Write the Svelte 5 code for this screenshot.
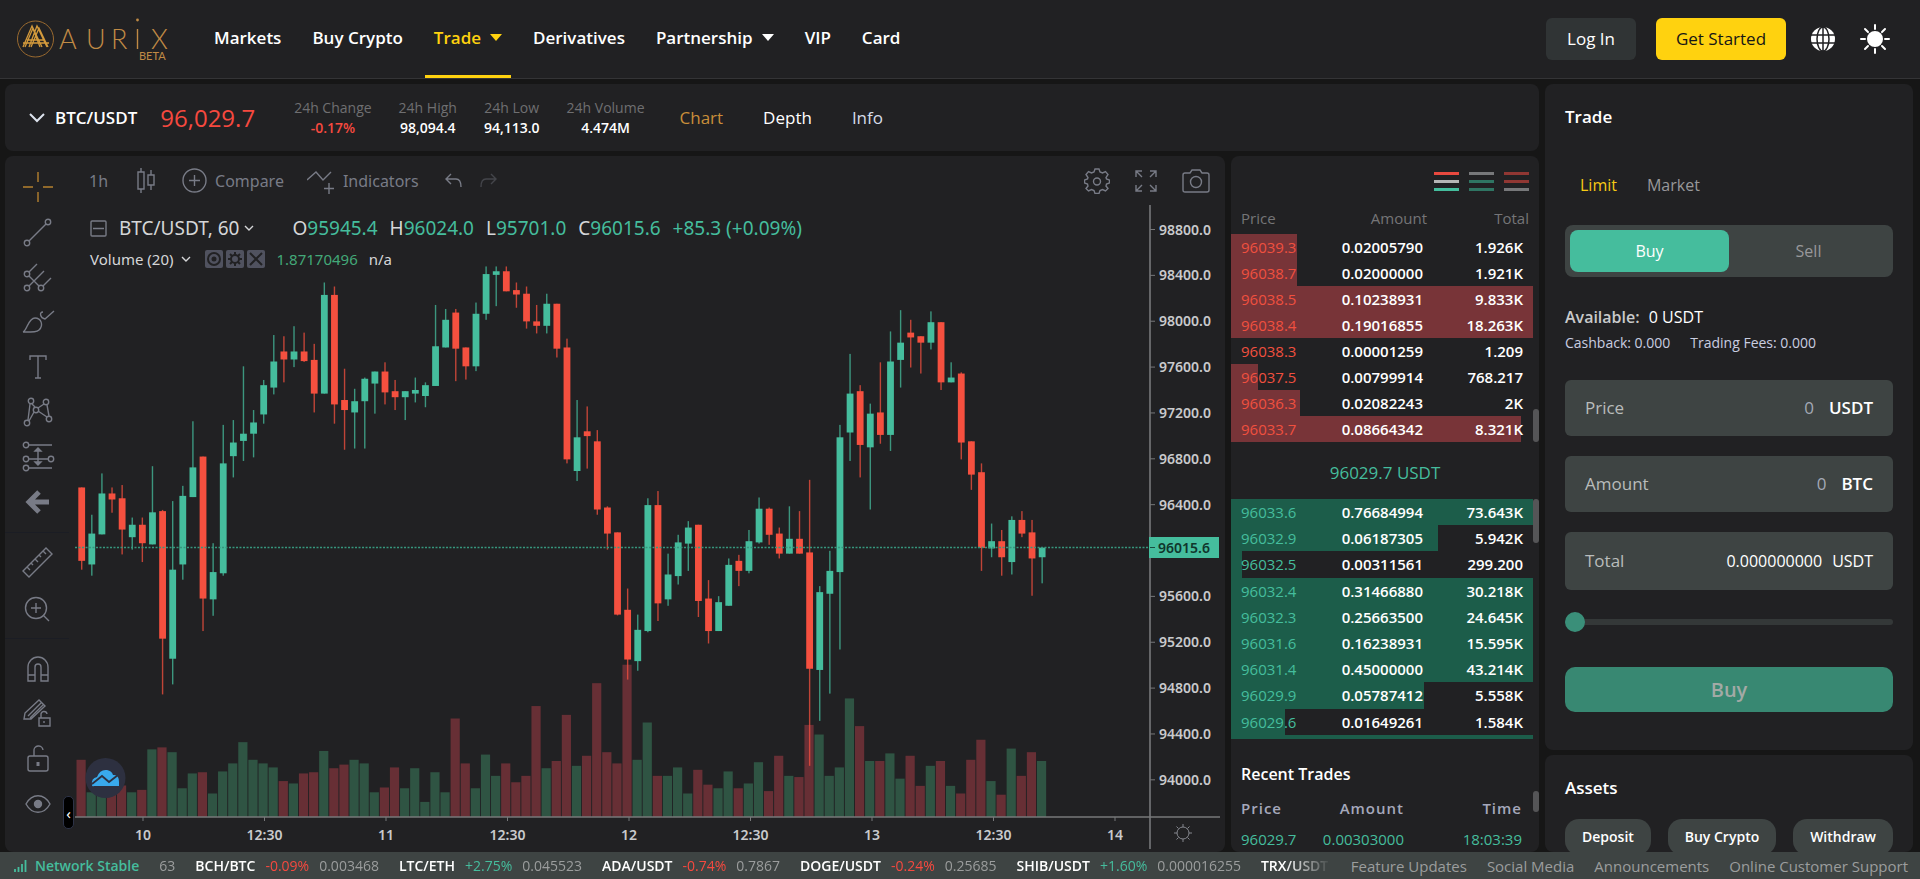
<script>
  let side = 'buy';
  let orderType = 'limit';
  let price = '';
  let amount = '';
  let percent = 0;

  const menu = [
    { label: 'Markets' },
    { label: 'Buy Crypto' },
    { label: 'Trade', caret: true, active: true },
    { label: 'Derivatives' },
    { label: 'Partnership', caret: true },
    { label: 'VIP' },
    { label: 'Card' }
  ];

  const stats = [
    { label: '24h Change', value: '-0.17%', down: true },
    { label: '24h High', value: '98,094.4' },
    { label: '24h Low', value: '94,113.0' },
    { label: '24h Volume', value: '4.474M' }
  ];

  // price, amount, total, depth %
  const asks = [
    ['96039.3', '0.02005790', '1.926K', 22],
    ['96038.7', '0.02000000', '1.921K', 22],
    ['96038.5', '0.10238931', '9.833K', 100],
    ['96038.4', '0.19016855', '18.263K', 100],
    ['96038.3', '0.00001259', '1.209', 0],
    ['96037.5', '0.00799914', '768.217', 9],
    ['96036.3', '0.02082243', '2K', 23],
    ['96033.7', '0.08664342', '8.321K', 96]
  ];
  const bids = [
    ['96033.6', '0.76684994', '73.643K', 100],
    ['96032.9', '0.06187305', '5.942K', 68.5],
    ['96032.5', '0.00311561', '299.200', 3.5],
    ['96032.4', '0.31466880', '30.218K', 100],
    ['96032.3', '0.25663500', '24.645K', 100],
    ['96031.6', '0.16238931', '15.595K', 100],
    ['96031.4', '0.45000000', '43.214K', 100],
    ['96029.9', '0.05787412', '5.558K', 64],
    ['96029.6', '0.01649261', '1.584K', 18]
  ];

  const tape = [
    ['BCH/BTC', '-0.09%', '0.003468'],
    ['LTC/ETH', '+2.75%', '0.045523'],
    ['ADA/USDT', '-0.74%', '0.7867'],
    ['DOGE/USDT', '-0.24%', '0.25685'],
    ['SHIB/USDT', '+1.60%', '0.000016255']
  ];
  const links = ['Feature Updates', 'Social Media', 'Announcements', 'Online Customer Support'];

  // up(1)/down(0), high, body top, body bottom, low, volume top
  const candles = [
    [0,592,592,775,797,1271],[1,660,707,784,812,1352],[1,557,607,709,709,1352],[0,592,607,622,655,1345],
    [0,586,619,697,759,1335],[1,667,685,716,747,1352],[0,667,685,731,778,1346],[1,539,654,734,734,1245],
    [0,648,651,969,1108,1240],[1,626,797,1019,1083,1252],[1,588,613,784,822,1342],[1,427,542,616,616,1305],
    [0,515,515,869,950,1302],[1,731,803,871,912,1355],[1,436,532,806,812,1300],[1,424,480,514,567,1280],
    [1,290,458,476,526,1227],[1,399,430,458,517,1271],[1,324,337,410,433,1280],[1,212,278,343,360,1290],
    [0,215,253,273,330,1324],[1,190,253,273,292,1330],[0,206,253,277,279,1305],[0,234,274,358,405,1302],
    [1,81,112,358,358,1249],[0,91,112,385,433,1292],[0,296,374,399,498,1283],[1,346,377,405,495,1271],
    [1,318,321,377,495,1280],[1,303,303,333,408,1352],[0,280,303,355,385,1340],[0,324,352,367,399,1290],
    [1,352,352,367,424,1342],[1,318,349,358,380,1292],[1,330,337,364,392,1376],[1,137,240,339,339,1302],
    [1,147,174,243,243,1352],[0,147,156,246,327,1168],[0,243,243,290,323,1280],[1,131,159,290,302,1342],
    [1,41,60,159,174,1258],[1,41,53,62,140,1311],[0,41,53,103,103,1280],[0,81,100,111,144,1327],
    [0,91,109,178,196,1311],[0,137,178,189,208,1137],[1,109,134,189,208,1292],[0,134,134,246,268,1274],
    [0,221,243,522,532,1159],[1,374,467,551,576,1286],[0,390,452,464,545,1261],[0,449,477,647,660,1080],
    [0,639,642,707,747,1252],[0,704,704,909,911,1280],[0,844,897,1021,1071,1034],[1,909,947,1025,1049,1271],
    [1,619,636,950,953,1178],[0,601,636,881,925,1311],[1,757,809,871,887,1311],[1,710,729,813,834,1290],
    [1,676,692,732,800,1355],[0,685,685,875,915,1296],[0,823,869,950,981,1333],[1,863,878,950,950,1342],
    [1,769,785,887,887,1300],[0,760,775,800,838,1342],[1,698,726,800,806,1330],[1,617,645,729,732,1277],
    [0,642,645,710,735,1349],[0,692,707,757,769,1261],[1,639,720,757,757,1311],[0,651,720,757,757,1314],
    [0,573,754,1044,1286,1184],[1,838,853,1047,1174,1208],[1,750,800,857,1106,1311],[1,436,467,803,996,1290],
    [1,259,358,455,526,1118],[0,337,352,486,567,1187],[1,383,408,492,647,1274],[0,280,405,461,483,1274],
    [1,203,278,461,501,1255],[1,150,231,274,343,1318],[0,174,206,218,293,1261],[0,215,215,231,308,1336],
    [1,153,180,231,248,1286],[0,180,180,330,349,1274],[1,280,318,330,330,1336],[0,305,308,480,522,1355],
    [0,477,477,560,598,1271],[0,532,554,743,800,1221],[1,682,726,744,766,1324],[0,698,726,766,812,1358],
    [1,664,673,778,809,1243],[0,651,673,707,716,1311],[0,673,704,769,862,1252],[1,742,742,766,831,1274]
  ];

  const x = (i) => 6.7 + i * 10.11;
  const y = (v) => 45 + v * 0.4011;
  const priceY = (p) => 24.5 + (98800 - p) * 0.11465;

  const levels = [98800, 98400, 98000, 97600, 97200, 96800, 96400, 95600, 95200, 94800, 94400, 94000];
  const hours = ['10', '12:30', '11', '12:30', '12', '12:30', '13', '12:30', '14'];
</script>

<div class="page">
  <header>
    <a class="logo" href="#home" aria-label="Aurix Beta">
      <svg width="156" height="48" viewBox="0 0 156 48">
        <circle cx="19.500" cy="24" r="18" fill="none" stroke="#9a6a2f" />
        <g fill="none" stroke="#d39a3c" stroke-width="1.300">
          <path d="M7 32 16 11 24 32M9 32 17 13 26 32M13 32 21 11 31 32M15 32 23 13 32 32M7 28H33M11 25H28" />
        </g>
        <g class="brand">
          <text x="43 70 95" y="34">AUR</text>
          <text x="135" y="34">X</text>
        </g>
        <path d="M121.500 14V34" stroke="#c08a45" stroke-width="1.400" />
        <circle cx="121.500" cy="5" r="1.400" fill="#c08a45" />
        <text class="beta" x="123" y="45">BETA</text>
      </svg>
    </a>
    <nav>
      {#each menu as item}
        <a href="#{item.label}" class:active={item.active}>
          {item.label}
          {#if item.caret}
            <svg width="12" height="7" viewBox="0 0 12 7"><path d="M0 0H12L6 7Z" fill="currentColor" /></svg>
          {/if}
        </a>
      {/each}
    </nav>
    <button class="login">Log In</button>
    <button class="start">Get Started</button>
    <button class="icon" aria-label="Language">
      <svg width="24" height="24" viewBox="0 0 24 24">
        <circle cx="12" cy="12" r="12" fill="#fff" />
        <g fill="none" stroke="#212123" stroke-width="1.500">
          <ellipse cx="12" cy="12" rx="6" ry="12" />
          <path d="M12 0V24M0 8H24M0 16H24" />
        </g>
      </svg>
    </button>
    <button class="icon sun" aria-label="Theme">
      <svg width="30" height="30" viewBox="0 0 30 30">
        <circle cx="15" cy="15" r="8" fill="#fff" />
        <path d="M15 1V5M15 25V29M1 15H5M25 15H29M5 5 8 8M22 22 25 25M25 5 22 8M8 22 5 25" stroke="#fff" stroke-width="2" stroke-linecap="round" />
      </svg>
    </button>
  </header>

  <main>
    <div class="left">
      <section class="panel ticker">
        <button class="pair">
          <svg width="16" height="10" viewBox="0 0 16 10"><path d="M1 1 8 8 15 1" fill="none" stroke="#dde3ee" stroke-width="2" /></svg>
          BTC/USDT
        </button>
        <span class="last">96,029.7</span>
        <dl>
          {#each stats as s}
            <div>
              <dt>{s.label}</dt>
              <dd class:down={s.down}>{s.value}</dd>
            </div>
          {/each}
        </dl>
        <div class="views">
          <button class="on">Chart</button>
          <button>Depth</button>
          <button class="dim">Info</button>
        </div>
      </section>

      <div class="row">
        <section class="panel chart">
          <div class="tools">
            <button aria-label="Cross" class="gold"><svg viewBox="0 0 30 30"><path d="M15 0V10M15 20V30M0 15H10M20 15H30" /></svg></button>
            <button aria-label="Trend line"><svg viewBox="0 0 30 30"><circle cx="4" cy="26" r="2.700" /><circle cx="25" cy="5" r="2.700" /><path d="M6 24 23 7" /></svg></button>
            <button aria-label="Pitchfork"><svg viewBox="0 0 30 30"><circle cx="4" cy="12" r="2.700" /><circle cx="4" cy="26" r="2.700" /><circle cx="18" cy="26" r="2.700" /><path d="M6 10 14 2M6 24 21 9M20 24 28 16M6 14 16 24" /></svg></button>
            <button aria-label="Brush"><svg viewBox="0 0 30 30"><path d="M0 25C4 24 5 11 12 11C18 11 21 18 16 23C14 25 11 25 0 25ZM20 5C16 5 17 11 22 12L31 4" /></svg></button>
            <button aria-label="Text"><svg viewBox="0 0 30 30"><path d="M7 8V4H23V8M15 4V26M12 26H18" /></svg></button>
            <button aria-label="Pattern"><svg viewBox="0 0 30 30"><circle cx="8" cy="4" r="2.700" /><circle cx="23" cy="5" r="2.700" /><circle cx="13" cy="13" r="2.700" /><circle cx="4" cy="26" r="2.700" /><circle cx="26" cy="22" r="2.700" /><path d="M7 7 5 23M9 7 12 10M15 11 21 7M24 8 26 19M6 24 11 15M15 14 24 20" /></svg></button>
            <button aria-label="Position"><svg viewBox="0 0 30 30"><circle cx="3" cy="3" r="2.700" /><circle cx="3" cy="17" r="2.700" /><circle cx="28" cy="17" r="2.700" /><circle cx="3" cy="26" r="2.700" /><path d="M6 3H29M6 17H25M6 26H29M15 6V23" /><path d="M12 9 15 6 18 9ZM12 20 15 23 18 20Z" fill="#787b86" /></svg></button>
            <button aria-label="Hide drawings"><svg viewBox="0 0 30 30"><path d="M16 5 6 15 16 25M7 15H26" stroke-width="5" /></svg></button>
            <hr />
            <button aria-label="Measure"><svg viewBox="0 0 30 30"><path d="M0 23 23 0 29 6 6 29ZM4 19 7 22M8 15 10 17M12 11 15 14M16 7 18 9M20 3 23 6" /></svg></button>
            <button aria-label="Zoom in"><svg viewBox="0 0 30 30"><circle cx="13" cy="15" r="10.500" /><path d="M13 10V20M8 15H18M20 22 26 28" /></svg></button>
            <hr />
            <button aria-label="Magnet"><svg viewBox="0 0 30 30"><path d="M5 27V13A10 10 0 0 1 25 13V27H18V13A3 3 0 0 0 12 13V27ZM5 21H12M18 21H25" /></svg></button>
            <button aria-label="Stay in drawing mode"><svg viewBox="0 0 30 30"><path d="M1 20 2 14 16 1 22 7 8 20ZM5 17 18 4M7 19 20 6M16 19H27V27H16ZM18 19V16A3 3 0 0 1 24 15M21 22V24" /></svg></button>
            <button aria-label="Lock"><svg viewBox="0 0 30 30"><rect x="5" y="12" width="20" height="15" rx="2" /><path d="M11 12V7A4.500 4.500 0 0 1 20 6" /><path d="M15 18V22" stroke-width="3" /></svg></button>
            <button aria-label="Show"><svg viewBox="0 0 30 30"><path d="M3 15C9 4 21 4 27 15C21 26 9 26 3 15Z" /><circle cx="15" cy="15" r="3.500" fill="#787b86" /></svg></button>
          </div>

          <div class="canvas">
            <div class="bar">
              <button class="span">1h</button>
              <button class="kind" aria-label="Candles"><svg width="20" height="26" viewBox="0 0 20 26"><path d="M5 0V4M5 21V25M2 4H8V21H2ZM15 2V7M15 17V22M12 7H18V17H12Z" /></svg></button>
              <button><svg width="25" height="25" viewBox="0 0 25 25"><circle cx="12.500" cy="12.500" r="11.500" /><path d="M12.500 7V18M7 12.500H18" /></svg>Compare</button>
              <button class="ind"><svg width="28" height="26" viewBox="0 0 28 26"><path d="M0 12 9 4 16 12 24 4M22 15V26M17 20.500H27" /></svg>Indicators</button>
              <button class="undo" aria-label="Undo"><svg width="18" height="16" viewBox="0 0 18 16"><path d="M6 1 1 6 6 11M1 6H11Q16 6 16 14" /></svg></button>
              <button class="redo" aria-label="Redo"><svg width="18" height="16" viewBox="0 0 18 16"><path d="M12 1 17 6 12 11M17 6H7Q2 6 2 14" /></svg></button>
              <div class="right">
                <button aria-label="Settings"><svg width="26" height="26" viewBox="0 0 26 26"><path d="M11 1H15L16 4L18.500 5L21.500 3.500L24 6.500L22 9.500L22.500 11L25.500 12V15L22.500 16L22 18L24 20.500L21.500 23L18.500 21.500L16 22.500L15 25.500H11L10 22.500L7.500 21.500L4.500 23L2 20.500L4 18L3.500 16L.5 15V12L3.500 11L4 9.500L2 6.500L4.500 3.500L7.500 5L10 4Z" /><circle cx="13" cy="13.500" r="3.500" /></svg></button>
                <button aria-label="Full screen"><svg width="22" height="22" viewBox="0 0 22 22"><path d="M1 7V1H7M1 1 7 7M15 1H21V7M21 1 15 7M1 15V21H7M1 21 7 15M21 15V21H15M21 21 15 15" /></svg></button>
                <button aria-label="Snapshot"><svg width="28" height="24" viewBox="0 0 28 24"><path d="M3 4H8L10 1H18L20 4H25Q27 4 27 6V21Q27 23 25 23H3Q1 23 1 21V6Q1 4 3 4Z" /><circle cx="14" cy="13" r="5.500" /></svg></button>
              </div>
            </div>

            <div class="plot">
              <svg class="series" viewBox="0 0 1145 647">
                {#each candles as [up, , , , , vol], i}
                  <rect x={x(i) - 5.2} y={y(vol)} width="9.200" height={612 - y(vol)} fill={up ? '#2f5443' : '#672f35'} />
                {/each}
                {#each candles as [up, high, top, bottom, low], i}
                  <g fill={up ? '#45bd9d' : '#f5503f'}>
                    <rect x={x(i) - 0.7} y={y(high)} width="1.400" height={y(low) - y(high)} opacity="0.750" />
                    <rect x={x(i) - 3.4} y={y(top)} width="6.800" height={y(bottom) - y(top)} />
                  </g>
                {/each}
                <path d="M0 342.500H1075" stroke="#37967d" stroke-width="1.500" stroke-dasharray="2 1.500" />
                <path d="M0 612H1145M1075 0V644" stroke="#77787a" stroke-width="1.600" />
                {#each levels as p}
                  <path d="M1075 {priceY(p)}h5" stroke="#77787a" />
                  <text x="1110" y={priceY(p) + 5}>{p}.0</text>
                {/each}
                <rect x="1074" y="332" width="70" height="21" fill="#45bd9d" />
                <path d="M1075 342.500h5" stroke="#1b4b3f" />
                <text class="now" x="1109" y="348">96015.6</text>
                {#each hours as h, i}
                  <path d="M{68 + i * 121.5} 612v4" stroke="#77787a" />
                  <text x={68 + i * 121.5} y="635">{h}</text>
                {/each}
                <g transform="translate(1108 628)" fill="none" stroke="#85878e">
                  <circle r="6" />
                  <path d="M0-9V-6M0 6V9M-9 0H-6M6 0H9M-6.500-6.500-4.500-4.500M4.500 4.500 6.500 6.500M6.500-6.500 4.500-4.500M-4.500 4.500-6.500 6.500" />
                </g>
                <circle cx="30.500" cy="573" r="20" fill="#2d3040" />
                <path d="M17 580Q16 573 22 572Q25 564 32 565Q37 566 38 570Q44 569 44 577L44 581H19Q17 582 17 580Z" fill="#39a9ec" />
                <path d="M17 579 27 571 34 577 43 570" fill="none" stroke="#2d3040" stroke-width="1.800" />
              </svg>

              <div class="legend">
                <div class="ohlc">
                  <svg width="17" height="17" viewBox="0 0 17 17"><rect x="1" y="1" width="15" height="15" rx="1" /><path d="M3 8.500H14" /></svg>
                  <span class="name">BTC/USDT, 60</span>
                  <svg width="10" height="7" viewBox="0 0 10 7" class="lite"><path d="M1 1 5 5 9 1" /></svg>
                  <span class="o">O<b>95945.4</b></span>
                  <span>H<b>96024.0</b></span>
                  <span>L<b>95701.0</b></span>
                  <span>C<b>96015.6</b></span>
                  <span><b>+85.3 (+0.09%)</b></span>
                </div>
                <div class="vol">
                  <span>Volume (20)</span>
                  <svg width="10" height="7" viewBox="0 0 10 7" class="lite"><path d="M1 1 5 5 9 1" /></svg>
                  <div class="boxes">
                    <button aria-label="Hide"><svg width="18" height="18" viewBox="0 0 18 18"><circle cx="9" cy="9" r="6" /><circle cx="9" cy="9" r="1.500" fill="#212123" /></svg></button>
                    <button aria-label="Format"><svg width="18" height="18" viewBox="0 0 18 18"><circle cx="9" cy="9" r="4" /><path d="M9 2V5M9 13V16M2 9H5M13 9H16M4 4 6 6M12 12 14 14M14 4 12 6M6 12 4 14" /></svg></button>
                    <button aria-label="Remove"><svg width="18" height="18" viewBox="0 0 18 18"><path d="M3 3 15 15M15 3 3 15" /></svg></button>
                  </div>
                  <b>1.87170496</b>
                  <span>n/a</span>
                </div>
              </div>
              <button class="fold" aria-label="Collapse toolbar">‹</button>
            </div>
          </div>
        </section>

        <section class="panel book">
          <div class="modes">
            <button aria-label="Both" class="both"><i></i><i></i><i></i></button>
            <button aria-label="Bids" class="onlybids"><i></i><i></i><i></i></button>
            <button aria-label="Asks" class="onlyasks"><i></i><i></i><i></i></button>
          </div>
          <div class="heads"><span>Price</span><span>Amount</span><span>Total</span></div>
          <div class="list asks">
            <table>
              <tbody>
                {#each asks as [p, a, t, depth]}
                  <tr>
                    <td class="p"><i style="width: {depth}%"></i><span>{p}</span></td>
                    <td class="a">{a}</td>
                    <td class="t">{t}</td>
                  </tr>
                {/each}
              </tbody>
            </table>
            <div class="thumb"></div>
          </div>
          <div class="mid">96029.7 USDT</div>
          <div class="list bids">
            <table>
              <tbody>
                {#each bids as [p, a, t, depth]}
                  <tr>
                    <td class="p"><i style="width: {depth}%"></i><span>{p}</span></td>
                    <td class="a">{a}</td>
                    <td class="t">{t}</td>
                  </tr>
                {/each}
                <tr class="edge"><td class="p"><i style="width: 100%"></i></td><td></td><td></td></tr>
              </tbody>
            </table>
            <div class="thumb"></div>
          </div>
          <h2>Recent Trades</h2>
          <div class="recent">
            <table>
              <thead>
                <tr><th>Price</th><th>Amount</th><th>Time</th></tr>
              </thead>
              <tbody>
                <tr><td>96029.7</td><td>0.00303000</td><td>18:03:39</td></tr>
              </tbody>
            </table>
            <div class="thumb"></div>
          </div>
        </section>
      </div>
    </div>

    <aside>
      <section class="panel trade">
        <h2>Trade</h2>
        <div class="types">
          <button class:on={orderType === 'limit'} on:click={() => (orderType = 'limit')}>Limit</button>
          <button class:on={orderType === 'market'} on:click={() => (orderType = 'market')}>Market</button>
        </div>
        <div class="sides">
          <button class:on={side === 'buy'} on:click={() => (side = 'buy')}>Buy</button>
          <button class:on={side === 'sell'} on:click={() => (side = 'sell')}>Sell</button>
        </div>
        <p class="avail"><b>Available:</b> 0 USDT</p>
        <p class="fees"><span>Cashback: 0.000</span><span>Trading Fees: 0.000</span></p>
        <label class="field">
          <span>Price</span>
          <input bind:value={price} placeholder="0" />
          <b>USDT</b>
        </label>
        <label class="field">
          <span>Amount</span>
          <input bind:value={amount} placeholder="0" />
          <b>BTC</b>
        </label>
        <label class="field total">
          <span>Total</span>
          <input value="0.000000000" readonly />
          <em>USDT</em>
        </label>
        <input class="slider" type="range" min="0" max="100" bind:value={percent} aria-label="Percent of balance" />
        <button class="submit">Buy</button>
      </section>
      <section class="panel assets">
        <h2>Assets</h2>
        <div class="acts">
          <button>Deposit</button>
          <button>Buy Crypto</button>
          <button>Withdraw</button>
        </div>
      </section>
    </aside>
  </main>

  <footer>
    <span class="net">
      <svg width="13" height="12" viewBox="0 0 13 12"><path d="M1 12V9M4.500 12V7M8 12V4M11.500 12V0" stroke="#45bd9d" stroke-width="1.800" /></svg>
      Network Stable
    </span>
    <div class="tape">
      <span>63</span>
      {#each tape as [pair, change, value]}
        <span class="item"><b>{pair}</b><em class:down={change[0] === '-'}>{change}</em><span>{value}</span></span>
      {/each}
      <span class="item"><b>TRX/USDT</b></span>
    </div>
    {#each links as link}
      <a href="#{link}">{link}</a>
    {/each}
  </footer>
</div>

<style>
  :global(body) {
    margin: 0;
    background: #161616;
  }
  .page {
    height: 100vh;
    display: flex;
    flex-direction: column;
    overflow: hidden;
    color: #fff;
    font-family: "Open Sans", "Noto Sans", sans-serif;
    font-size: 16px;
    line-height: 20px;
  }
  button {
    background: none;
    border: none;
    padding: 0;
    margin: 0;
    color: inherit;
    font: inherit;
    cursor: pointer;
  }
  a {
    color: inherit;
    text-decoration: none;
  }
  h2, p, dl, dd {
    margin: 0;
  }
  h2 {
    font-size: 17px;
    font-weight: 600;
  }
  b {
    font-weight: 600;
  }
  em {
    font-style: normal;
  }
  svg {
    display: block;
    flex: none;
  }
  table {
    width: 100%;
    border-collapse: collapse;
  }
  .panel {
    background: #212123;
    border-radius: 8px;
    overflow: hidden;
  }

  header {
    flex: none;
    height: 78px;
    display: flex;
    align-items: center;
    background: #212123;
    border-bottom: 1px solid #343436;
    padding: 0 30px 0 16px;
  }
  .brand text {
    font-family: Lato, sans-serif;
    font-weight: 300;
    font-size: 27px;
    fill: #c08a45;
  }
  .beta {
    font-family: Lato, sans-serif;
    font-size: 11px;
    fill: #c08a45;
  }
  nav {
    flex: 1;
    display: flex;
    gap: 13px;
    height: 78px;
    padding-left: 33px;
  }
  nav a {
    display: flex;
    align-items: center;
    gap: 9px;
    padding: 0 9px;
    font-size: 17px;
    font-weight: 600;
    border-bottom: 3px solid transparent;
  }
  nav a.active {
    color: #ffd20f;
    border-color: #ffd20f;
  }
  .login, .start {
    height: 42px;
    width: 90px;
    border-radius: 6px;
    background: #303435;
    font-size: 17px;
    font-weight: 500;
  }
  .start {
    width: 130px;
    margin: 0 25px 0 20px;
    background: #ffd20f;
    color: #161616;
  }
  .sun {
    margin-left: 25px;
  }

  main {
    flex: 1;
    min-height: 0;
    display: flex;
    gap: 6px;
    padding: 5px 7px 0 5px;
  }
  .left {
    flex: 1;
    min-width: 0;
    display: flex;
    flex-direction: column;
    gap: 5px;
  }
  .ticker {
    flex: none;
    height: 67px;
    display: flex;
    align-items: center;
    padding-left: 24px;
  }
  .pair {
    display: flex;
    align-items: center;
    gap: 10px;
    font-size: 17px;
    font-weight: 600;
  }
  .last {
    margin: 0 39px 0 23px;
    font-size: 24px;
    font-weight: 500;
    color: #f6493f;
  }
  dl {
    display: flex;
    gap: 27px;
    text-align: center;
    font-size: 14px;
  }
  dt {
    color: #6f6f71;
  }
  dd {
    font-weight: 600;
  }
  .down {
    color: #f6493f;
  }
  .views {
    display: flex;
    gap: 40px;
    padding-left: 35px;
    font-size: 17px;
  }
  .views .on {
    color: #c98e3a;
  }
  .views .dim {
    color: #d5dbe8;
  }
  .row {
    flex: 1;
    min-height: 0;
    display: flex;
    gap: 6px;
  }

  .chart {
    flex: 1;
    min-width: 0;
    display: flex;
    padding-right: 5px;
    font-family: "Noto Sans", "Open Sans", sans-serif;
  }
  .chart svg {
    fill: none;
    stroke: #787b86;
    stroke-width: 1.4;
  }
  .tools {
    flex: none;
    width: 70px;
    padding-top: 8px;
  }
  .tools button {
    display: flex;
    align-items: center;
    justify-content: center;
    width: 66px;
    height: 45px;
  }
  .tools svg {
    width: 30px;
    height: 30px;
    overflow: visible;
  }
  .tools .gold svg {
    stroke: #b5812f;
  }
  .tools hr {
    width: 64px;
    margin: 8px 0 7px;
    border: none;
    border-top: 1px solid #1b1d24;
  }
  .canvas {
    flex: 1;
    min-width: 0;
  }
  .bar {
    height: 49px;
    display: flex;
    align-items: center;
    padding-left: 14px;
    color: #787b86;
  }
  .bar button {
    display: flex;
    align-items: center;
    gap: 8px;
  }
  .kind {
    margin: 0 26px 0 28px;
  }
  .ind {
    margin: 0 26px 0 23px;
  }
  .redo {
    margin-left: 16px;
    opacity: 0.4;
  }
  .bar .right {
    display: flex;
    align-items: center;
    gap: 25px;
    margin-left: auto;
    padding-right: 10px;
  }
  .plot {
    position: relative;
  }
  .chart .series {
    width: 100%;
    stroke: none;
    stroke-width: 1;
  }
  .series text {
    fill: #c9cacc;
    font-size: 14px;
    font-weight: 600;
    text-anchor: middle;
  }
  .series .now {
    fill: #10362c;
  }
  .legend {
    position: absolute;
    top: 10px;
    left: 15px;
    color: #d5d6d8;
  }
  .legend b {
    color: #45bd9d;
    font-weight: 400;
  }
  .legend .lite {
    stroke: #d5d6d8;
  }
  .ohlc {
    display: flex;
    align-items: center;
    gap: 12px;
    font-size: 19px;
    line-height: 26px;
  }
  .ohlc .lite {
    margin-left: -7px;
  }
  .ohlc .o {
    margin-left: 26px;
  }
  .vol {
    display: flex;
    align-items: center;
    gap: 8px;
    margin-top: 8px;
    font-size: 15px;
  }
  .boxes {
    display: flex;
    gap: 3px;
    margin: 0 3px 0 6px;
  }
  .boxes button {
    background: #50525f;
    border-radius: 2px;
  }
  .boxes svg {
    stroke: #212123;
    stroke-width: 2;
  }
  .vol b {
    margin-right: 3px;
    color: #43a878;
  }
  .fold {
    position: absolute;
    left: -12px;
    top: 591px;
    width: 11px;
    height: 33px;
    border: 1px solid #2d3347;
    border-radius: 5px;
    background: #000;
    font-size: 15px;
    line-height: 28px;
  }

  .book {
    flex: none;
    width: 308px;
    font-size: 15px;
  }
  .modes {
    display: flex;
    justify-content: flex-end;
    gap: 10px;
    padding: 16px 10px 16px;
  }
  .modes button {
    display: flex;
    flex-direction: column;
    gap: 5px;
    width: 25px;
  }
  .modes i {
    height: 3px;
    width: 100%;
    background: #77787a;
  }
  .both i:first-child {
    background: #e8493f;
  }
  .both i:nth-child(2) {
    background: #b5b5b5;
  }
  .both i:last-child {
    background: #45bd9d;
  }
  .onlybids i:not(:first-child) {
    background: #2f7563;
  }
  .onlyasks i:not(:last-child) {
    background: #903733;
  }
  .heads {
    display: grid;
    grid-template-columns: 90px 1fr 102px;
    padding: 0 10px;
    height: 27px;
    line-height: 22px;
    color: #757577;
    text-align: right;
  }
  .heads span:first-child {
    text-align: left;
  }
  .list, .recent {
    position: relative;
    padding-right: 6px;
  }
  .list {
    height: 208px;
    overflow: hidden;
  }
  .bids {
    height: 240px;
  }
  .list table {
    table-layout: fixed;
    height: 208px;
  }
  .bids table {
    height: 262px;
  }
  .list tr {
    position: relative;
    height: 26px;
    font-weight: 600;
  }
  .list td {
    padding: 0;
    line-height: 26px;
    text-align: right;
  }
  .list .p {
    width: 80px;
    text-align: left;
    padding-left: 10px;
    font-weight: 500;
    color: #f0503f;
  }
  .bids .p {
    color: #45bd9d;
  }
  .list .p i {
    position: absolute;
    left: 0;
    top: 0;
    height: 100%;
    background: #783438;
  }
  .bids .p i {
    background: #1c5d4a;
  }
  .list .p span, .list .a, .list .t {
    position: relative;
  }
  .list .t {
    width: 100px;
    padding-right: 10px;
  }
  .thumb {
    position: absolute;
    right: 0;
    top: 0;
    width: 6px;
    height: 44px;
    border-radius: 3px;
    background: #555557;
  }
  .asks .thumb {
    top: auto;
    bottom: 0;
    height: 33px;
  }
  .mid {
    height: 57px;
    line-height: 62px;
    text-align: center;
    font-size: 17px;
    color: #45bd9d;
  }
  .book h2 {
    padding: 25px 10px 11px;
    font-size: 16px;
  }
  .recent th {
    padding: 0;
    font-weight: 600;
    letter-spacing: 1px;
    color: #a5a8bb;
    line-height: 26px;
  }
  .recent td {
    padding: 0;
    color: #45bd9d;
    font-weight: 500;
    line-height: 36px;
  }
  .recent th, .recent td {
    text-align: right;
  }
  .recent th:first-child, .recent td:first-child {
    width: 70px;
    text-align: left;
    padding-left: 10px;
  }
  .recent th:last-child, .recent td:last-child {
    width: 118px;
    padding-right: 11px;
  }
  .recent .thumb {
    top: -4px;
    height: 21px;
  }

  aside {
    flex: none;
    width: 368px;
    display: flex;
    flex-direction: column;
    gap: 5px;
  }
  .trade {
    flex: none;
    padding: 23px 20px 38px;
  }
  .types {
    display: flex;
    gap: 30px;
    padding: 48px 15px 30px;
    color: #98989a;
  }
  .types .on {
    color: #f7ca14;
  }
  .sides {
    display: flex;
    padding: 5px;
    border-radius: 8px;
    background: #3e4443;
    color: #98989a;
  }
  .sides button {
    flex: 1;
    height: 42px;
    border-radius: 8px;
  }
  .sides .on {
    background: #45bd9d;
    color: #fff;
  }
  .avail {
    padding-top: 30px;
  }
  .avail b {
    margin-right: 5px;
    color: #c9cacb;
  }
  .fees {
    display: flex;
    gap: 20px;
    padding: 6px 0 27px;
    font-size: 14px;
    color: #c9cde0;
  }
  .field {
    display: flex;
    align-items: center;
    height: 56px;
    margin-bottom: 20px;
    padding: 0 20px;
    border-radius: 6px;
    background: #3e4443;
    color: #b9bcbb;
    font-size: 17px;
    font-weight: 500;
  }
  .field input {
    flex: 1;
    min-width: 0;
    border: none;
    outline: none;
    background: none;
    padding: 0;
    margin-right: 15px;
    text-align: right;
    font: inherit;
    color: #fff;
  }
  .field input::placeholder {
    color: #a3a9b5;
  }
  .field b {
    color: #fff;
  }
  .total {
    height: 58px;
  }
  .total input, .total em {
    font-size: 16px;
    font-weight: 400;
    color: #fff;
  }
  .total input {
    margin-right: 10px;
  }
  .slider {
    appearance: none;
    display: block;
    width: 100%;
    height: 20px;
    margin: 22px 0 35px;
    background: none;
  }
  .slider::-webkit-slider-runnable-track {
    height: 6px;
    border-radius: 3px;
    background: #343838;
  }
  .slider::-webkit-slider-thumb {
    appearance: none;
    width: 20px;
    height: 20px;
    margin-top: -7px;
    border-radius: 50%;
    background: #3a8f79;
  }
  .submit {
    display: block;
    width: 100%;
    height: 45px;
    border-radius: 10px;
    background: #388872;
    color: #a3aaa6;
    font-size: 20px;
    font-weight: 600;
  }
  .assets {
    flex: 1;
    padding: 23px 20px 0;
  }
  .acts {
    display: flex;
    justify-content: space-between;
    padding-top: 21px;
  }
  .acts button {
    height: 36px;
    padding: 0 17px;
    border-radius: 14px;
    background: #3e4443;
    font-size: 14px;
    font-weight: 600;
  }

  footer {
    flex: none;
    height: 27px;
    display: flex;
    align-items: center;
    gap: 20px;
    padding: 0 12px 0 14px;
    background: #3e4443;
    font-size: 14px;
    color: #9b9d9d;
    white-space: nowrap;
  }
  footer a {
    font-size: 15px;
  }
  .net {
    display: flex;
    align-items: center;
    gap: 8px;
    color: #45bd9d;
    font-weight: 600;
  }
  .tape {
    flex: 1;
    min-width: 0;
    display: flex;
    gap: 20px;
    overflow: hidden;
    mask-image: linear-gradient(to right, #000 96%, transparent);
  }
  .item {
    display: flex;
    gap: 10px;
  }
  .item b {
    color: #fff;
  }
  .item em {
    color: #45bd9d;
  }
  .item em.down {
    color: #f6493f;
  }
</style>
